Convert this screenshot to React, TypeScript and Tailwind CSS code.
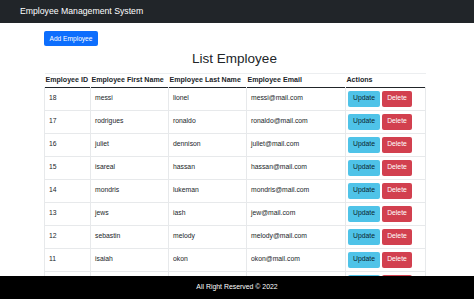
const employees = [
  { id: 18, first: 'messi', last: 'lionel', email: 'messi@mail.com' },
  { id: 17, first: 'rodrigues', last: 'ronaldo', email: 'ronaldo@mail.com' },
  { id: 16, first: 'juliet', last: 'dennison', email: 'juliet@mail.com' },
  { id: 15, first: 'isareal', last: 'hassan', email: 'hassan@mail.com' },
  { id: 14, first: 'mondris', last: 'lukeman', email: 'mondris@mail.com' },
  { id: 13, first: 'jews', last: 'iash', email: 'jew@mail.com' },
  { id: 12, first: 'sebastin', last: 'melody', email: 'melody@mail.com' },
  { id: 11, first: 'isaiah', last: 'okon', email: 'okon@mail.com' },
  { id: 10, first: 'david', last: 'james', email: 'james@mail.com' },
]

// Employee list page: navbar, add button, bordered table and a fixed footer.
export default function App() {
  return (
    <div className="min-h-[299px] bg-white font-['Liberation_Sans',Arial,sans-serif] text-[#212529]">
      <header className="flex h-[23px] items-center bg-[#212529] pl-[20px] text-[8.7px] text-white">
        Employee Management System
      </header>

      <main className="mx-[44px] w-[381px] pb-[40px]">
        <button
          type="button"
          className="mt-[8px] h-[15px] w-[54px] rounded-[2px] bg-[#0d6efd] text-[6.6px] text-white"
        >
          Add Employee
        </button>
        <h2 className="mt-[1px] text-center text-[13.5px] font-medium leading-[20px]">List Employee</h2>

        <table className="mt-[4px] w-full table-fixed border-collapse text-left" aria-label="Employees">
          <colgroup>
            <col className="w-[46px]" />
            <col className="w-[78px]" />
            <col className="w-[78px]" />
            <col className="w-[99px]" />
            <col className="w-[80px]" />
          </colgroup>
          <thead>
            <tr className="h-[14px] border-t border-b-[1.5px] border-t-[#eceef0] border-b-[#212529] text-[7.1px] font-bold">
              <th className="px-[1px] pt-[1px]">Employee ID</th>
              <th className="px-[1px] pt-[1px]">Employee First Name</th>
              <th className="px-[1px] pt-[1px]">Employee Last Name</th>
              <th className="px-[1px] pt-[1px]">Employee Email</th>
              <th className="px-[1px] pt-[1px]">Actions</th>
            </tr>
          </thead>
          <tbody className="text-[6.8px]">
            {employees.map((e) => (
              <tr key={e.id} className="border-b border-[#e7e9eb] align-top">
                <td className="border-x border-[#e7e9eb] px-[4px] pt-[5px] leading-[10px]">{e.id}</td>
                <td className="border-x border-[#e7e9eb] px-[4px] pt-[5px] leading-[10px]">{e.first}</td>
                <td className="border-x border-[#e7e9eb] px-[4px] pt-[5px] leading-[10px]">{e.last}</td>
                <td className="border-x border-[#e7e9eb] px-[4px] pt-[5px] leading-[10px]">{e.email}</td>
                <td className="border-x border-[#e7e9eb] px-[2px] py-[3px]">
                  <div className="flex gap-[2px]">
                    <button
                      type="button"
                      className="h-[16px] w-[32px] rounded-[2px] bg-[#4fc3e8] text-[6.8px] text-[#0b2530]"
                    >
                      Update
                    </button>
                    <button
                      type="button"
                      className="h-[16px] w-[30px] rounded-[2px] bg-[#d2404f] text-[6.8px] text-white"
                    >
                      Delete
                    </button>
                  </div>
                </td>
              </tr>
            ))}
          </tbody>
        </table>
      </main>

      <footer className="fixed inset-x-0 bottom-0 flex h-[23px] items-center justify-center bg-black text-[6.9px] text-white">
        All Right Reserved © 2022
      </footer>
    </div>
  )
}
